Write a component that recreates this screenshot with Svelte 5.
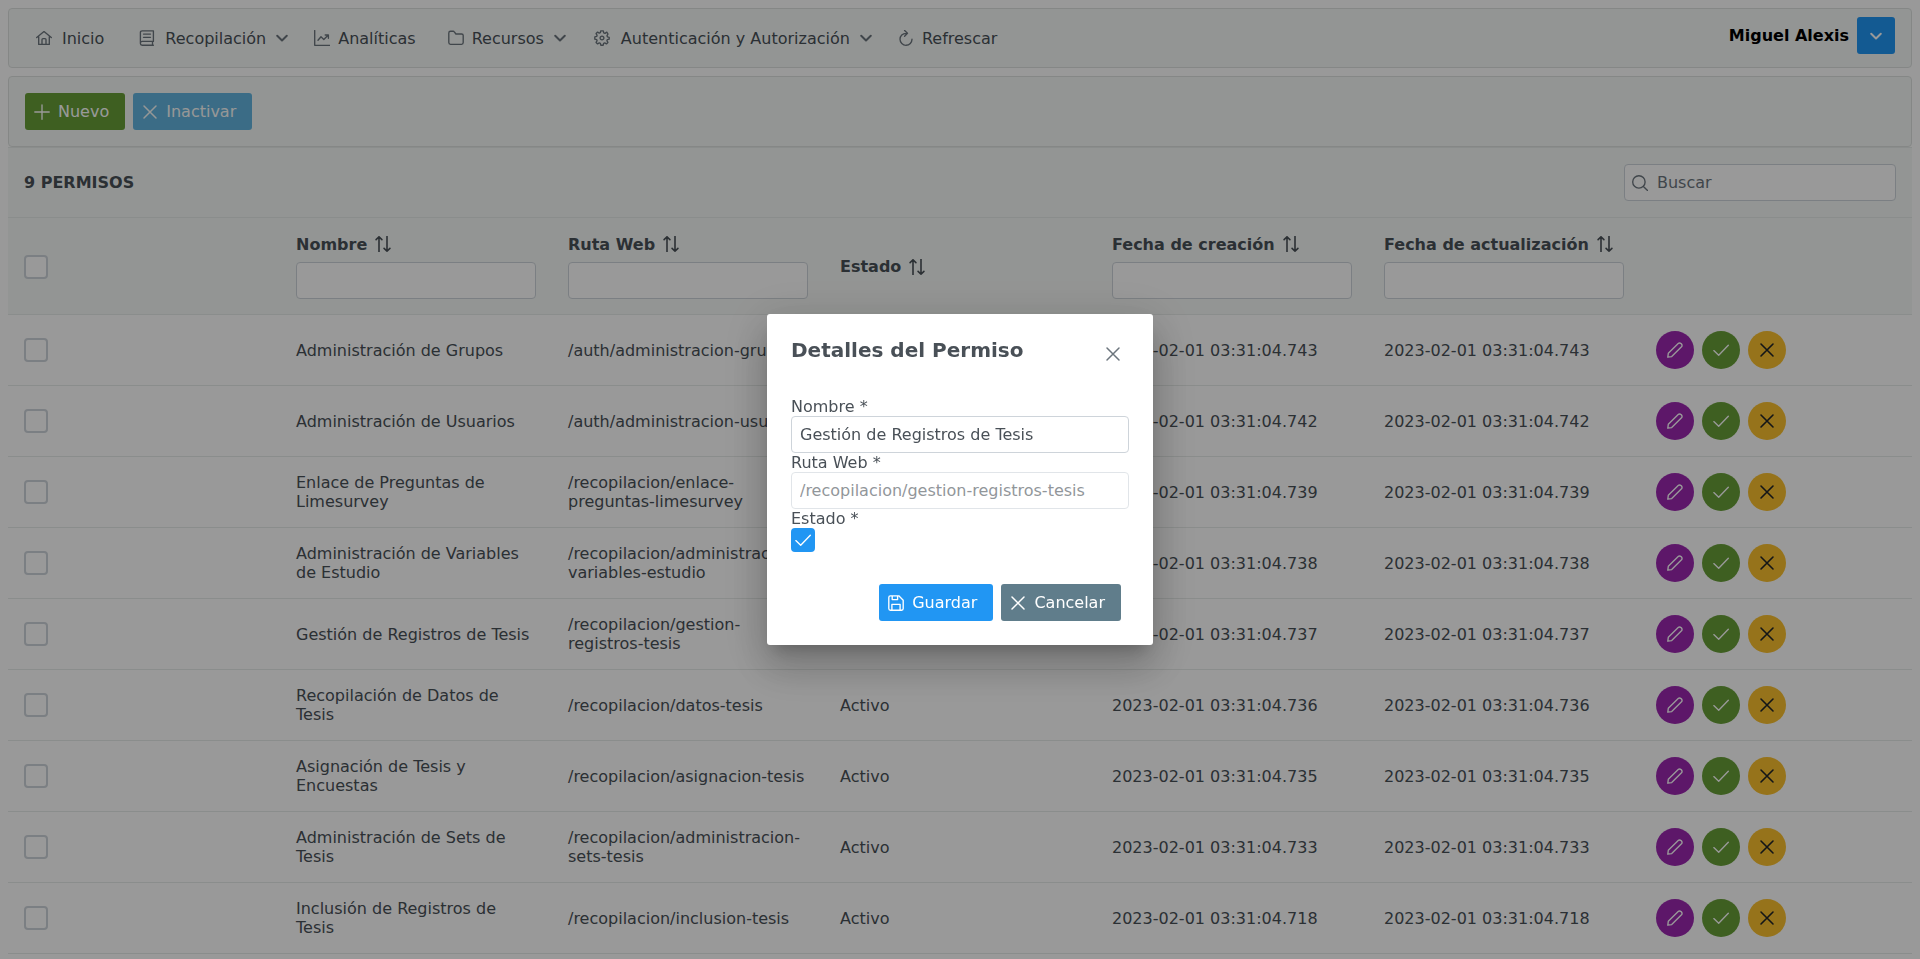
<script>
  const columns = [
    { id: 'nombre', label: 'Nombre', filter: true },
    { id: 'ruta', label: 'Ruta Web', filter: true },
    { id: 'estado', label: 'Estado', filter: false },
    { id: 'creacion', label: 'Fecha de creación', filter: true },
    { id: 'actualizacion', label: 'Fecha de actualización', filter: true }
  ];

  const permisos = [
    { nombre: 'Administración de Grupos', ruta: '/auth/administracion-grupos', ms: '743' },
    { nombre: 'Administración de Usuarios', ruta: '/auth/administracion-usuarios', ms: '742' },
    { nombre: 'Enlace de Preguntas de Limesurvey', ruta: '/recopilacion/enlace-preguntas-limesurvey', ms: '739' },
    { nombre: 'Administración de Variables de Estudio', ruta: '/recopilacion/administracion-variables-estudio', ms: '738' },
    { nombre: 'Gestión de Registros de Tesis', ruta: '/recopilacion/gestion-registros-tesis', ms: '737' },
    { nombre: 'Recopilación de Datos de Tesis', ruta: '/recopilacion/datos-tesis', ms: '736' },
    { nombre: 'Asignación de Tesis y Encuestas', ruta: '/recopilacion/asignacion-tesis', ms: '735' },
    { nombre: 'Administración de Sets de Tesis', ruta: '/recopilacion/administracion-sets-tesis', ms: '733' },
    { nombre: 'Inclusión de Registros de Tesis', ruta: '/recopilacion/inclusion-tesis', ms: '718' }
  ];

  const menu = [
    { icon: 'home', label: 'Inicio', wide: true },
    { icon: 'book', label: 'Recopilación', wide: true, sub: true },
    { icon: 'chart', label: 'Analíticas' },
    { icon: 'folder', label: 'Recursos', sub: true },
    { icon: 'cog', label: 'Autenticación y Autorización', wide: true, sub: true },
    { icon: 'refresh', label: 'Refrescar' }
  ];

  // Outline icons on a 16 unit grid
  const paths = {
    home: 'M.7 7.6 8 1.6l7.300 6M2.700 6.500V14.400H13.300V6.500M6 14.400V9.600Q6 8.600 7 8.600H9Q10 8.600 10 9.600V14.400',
    book: 'M14.400 11.400V.8H3.200Q1.400.8 1.400 2.600V13.400Q1.400 15.200 3.200 15.200H14.400M14.400 11.400H3.200Q1.400 11.400 1.400 13.200M13.500 11.400V15.200M4.500 4.100H11.500M4.500 7.300H11.500',
    chart: 'M.7.5V15.300H16M4 10.200 7 6.800 9.800 9.500 14.300 5M11.200 5H14.400V8.200',
    folder: 'M.8 12.600V3Q.8 1.200 2.500 1.200H5.200Q5.900 1.200 6.300 1.800L7.900 4H13.600Q15.200 4 15.200 5.600V12.600Q15.200 14.300 13.600 14.300H2.500Q.8 14.300.8 12.600Z',
    cog: 'M6.700.8H9.300L9.700 2.800 11 3.300 12.800 2.200 14 4 13 5.700 13.400 6.800 15.200 7.300V9.200L13.300 9.600 12.900 10.700 13.900 12.400 12.400 13.900 10.700 12.900 9.600 13.300 9.200 15.200H6.800L6.400 13.300 5.300 12.900 3.600 13.900 2.100 12.400 3.100 10.700 2.700 9.600.8 9.200V6.900L2.700 6.400 3.100 5.300 2.100 3.600 3.600 2.100 5.300 3.100 6.400 2.700ZM8 6.100A1.900 1.900 0 1 0 8 9.900A1.900 1.900 0 1 0 8 6.100Z',
    refresh: 'M9.200 3.300H8A6 6 0 1 0 14 9.200M6.600.500 9.500 3.300 6.600 6.200',
    chevron: 'M3.200 5.800 8 10.500 12.800 5.800',
    plus: 'M8 .8V15.200M.8 8H15.200',
    times: 'M2 2 14 14M14 2 2 14',
    search: 'M6.900.700A6.200 6.200 0 1 0 6.900 13.100A6.200 6.200 0 1 0 6.900.700M11.400 11.400 15.600 15.600',
    sort: 'M4 15.700V.800M1.100 3.600 4 .700 6.900 3.600M12 .300V15.200M9.100 12.400 12 15.300 14.900 12.400',
    check: 'M.8 8.600 5.700 13.200 15.300 3.300',
    pencil: 'M.8 15.200 1.300 11.300 11.200 1.500Q12.500.300 14.300 1.700Q15.700 3.400 14.500 4.800L4.700 14.600Z',
    save: 'M.8 13.600V2.400Q.8.800 2.400.800H10.800L15.200 5.200V13.600Q15.200 15.200 13.600 15.200H2.400Q.8 15.200.8 13.600ZM3.900 15V9.300H12.100V15M4.200 1V4.600H9.600V1'
  };
</script>

{#snippet icon(name, size = 16, weight = 1.35)}
  <svg class="icon" width={size} height={size} viewBox="0 0 16 16" aria-hidden="true">
    <path d={paths[name]} fill="none" stroke="currentColor" stroke-width={weight} stroke-linejoin="round" stroke-linecap="round" />
  </svg>
{/snippet}

<div class="page">
  <header class="menubar">
    <nav>
      {#each menu as item}
        <a href="#{item.icon}" class:sub={item.sub}>
          <span class="menu-icon" class:wide={item.wide}>{@render icon(item.icon)}</span>
          <span>{item.label}</span>
          {#if item.sub}
            <span class="arrow">{@render icon('chevron', 16, 2)}</span>
          {/if}
        </a>
      {/each}
    </nav>
    <div class="user">
      <b>Miguel Alexis</b>
      <button class="btn primary square" aria-label="Cuenta">{@render icon('chevron', 16, 2)}</button>
    </div>
  </header>

  <div class="toolbar">
    <button class="btn success">{@render icon('plus')}Nuevo</button>
    <button class="btn info" disabled>{@render icon('times', 16, 1.5)}Inactivar</button>
  </div>

  <main>
    <div class="table-header">
      <span>9 PERMISOS</span>
      <label class="search">
        {@render icon('search')}
        <input type="text" placeholder="Buscar" aria-label="Buscar" />
      </label>
    </div>

    <table>
      <thead>
        <tr>
          <th><input type="checkbox" aria-label="Todos" /></th>
          {#each columns as col}
            <th>
              <div class="col-title">
                <span id="col-{col.id}">{col.label}</span>
                {@render icon('sort', 16, 1.6)}
              </div>
              {#if col.filter}
                <input class="field filter" type="text" aria-labelledby="col-{col.id}" />
              {/if}
            </th>
          {/each}
          <th></th>
        </tr>
      </thead>
      <tbody>
        {#each permisos as p}
          <tr>
            <td><input type="checkbox" aria-labelledby="permiso-{p.ms}" /></td>
            <td id="permiso-{p.ms}">{p.nombre}</td>
            <td>{p.ruta}</td>
            <td>Activo</td>
            <td>2023-02-01 03:31:04.{p.ms}</td>
            <td>2023-02-01 03:31:04.{p.ms}</td>
            <td>
              <div class="actions">
                <button class="round help" aria-label="Editar">{@render icon('pencil')}</button>
                <button class="round success" aria-label="Activar">{@render icon('check')}</button>
                <button class="round warning" aria-label="Inactivar">{@render icon('times', 16, 1.6)}</button>
              </div>
            </td>
          </tr>
        {/each}
      </tbody>
    </table>
  </main>
</div>

<div class="mask">
  <div class="dialog" role="dialog" aria-modal="true" aria-labelledby="dialog-title">
    <div class="dialog-head">
      <h2 id="dialog-title">Detalles del Permiso</h2>
      <button class="close" aria-label="Cerrar">{@render icon('times', 16, 1.5)}</button>
    </div>
    <div class="dialog-body">
      <label for="f-nombre">Nombre *</label>
      <input id="f-nombre" class="field" type="text" value="Gestión de Registros de Tesis" />
      <label for="f-ruta">Ruta Web *</label>
      <input id="f-ruta" class="field" type="text" value="/recopilacion/gestion-registros-tesis" disabled />
      <label for="f-estado">Estado *</label>
      <span class="checkbox">
        <input id="f-estado" type="checkbox" checked />
        {@render icon('check')}
      </span>
    </div>
    <div class="dialog-foot">
      <button class="btn primary">{@render icon('save')}Guardar</button>
      <button class="btn secondary">{@render icon('times', 16, 1.5)}Cancelar</button>
    </div>
  </div>
</div>

<style>
  :global(body) {
    margin: 0;
    background: #fff;
  }

  .page,
  .mask {
    box-sizing: border-box;
    font: 16px/19px 'DejaVu Sans', sans-serif;
    color: #495057;
  }

  .page *,
  .mask * {
    box-sizing: border-box;
  }

  .page {
    padding: 8px 8px 0;
  }

  .icon {
    display: block;
    flex: none;
  }

  button,
  input {
    font: inherit;
    margin: 0;
  }

  .menubar {
    display: flex;
    justify-content: space-between;
    align-items: flex-start;
    padding: 8px 16px 8px 8px;
    border: 1px solid #dee2e0;
    border-radius: 4px;
    background: #f6f9f7;
  }

  nav {
    display: flex;
  }

  nav a {
    display: flex;
    align-items: center;
    height: 42px;
    padding: 0 16px;
    color: #495057;
    text-decoration: none;
  }

  nav a.sub {
    padding-right: 8px;
  }

  .menu-icon {
    display: flex;
    justify-content: center;
    width: 16px;
    margin-right: 8px;
    color: #6c757d;
  }

  .menu-icon.wide {
    width: 21px;
  }

  .arrow {
    margin-left: 8px;
    color: #6c757d;
  }

  .user {
    display: flex;
    align-items: center;
    gap: 8px;
    color: #000;
  }

  .btn {
    display: flex;
    align-items: center;
    gap: 8px;
    height: 37px;
    padding: 0 16px 0 9px;
    border: 0;
    border-radius: 3px;
    color: #fff;
  }

  .square {
    width: 38px;
    padding: 0;
    justify-content: center;
  }

  .btn:disabled {
    opacity: 0.6;
  }

  .primary {
    background: #2196f3;
  }

  .secondary {
    background: #607d8b;
  }

  .success {
    background: #689f38;
  }

  .info {
    background: #0288d1;
  }

  .help {
    background: #9c27b0;
  }

  .toolbar {
    display: flex;
    gap: 8px;
    margin-top: 8px;
    padding: 16px;
    border: 1px solid #dee2e0;
    border-radius: 4px;
    background: #f6f9f7;
  }

  .table-header {
    display: flex;
    justify-content: space-between;
    align-items: center;
    padding: 16px;
    border: solid #e7ebe9;
    border-width: 1px 0;
    background: #f6f9f7;
    font-weight: 700;
  }

  .search {
    display: flex;
    align-items: center;
    gap: 9px;
    width: 272px;
    height: 37px;
    padding: 0 7px;
    border: 1px solid #ced4da;
    border-radius: 4px;
    background: #fff;
    color: #6c757d;
    font-weight: 400;
  }

  .search input {
    flex: 1;
    min-width: 0;
    padding: 0;
    border: 0;
    outline: 0;
    background: none;
  }

  .search input::placeholder {
    color: #6c757d;
    opacity: 1;
  }

  .field {
    display: block;
    width: 100%;
    height: 37px;
    padding: 0 8px;
    border: 1px solid #ced4da;
    border-radius: 4px;
    background: #fff;
    color: #495057;
  }

  .field:disabled {
    opacity: 0.6;
  }

  table {
    width: 100%;
    table-layout: fixed;
    border-spacing: 0;
  }

  th,
  td {
    padding: 16px;
    border-bottom: 1px solid #e7ebe9;
    text-align: left;
    vertical-align: middle;
  }

  th {
    padding-bottom: 15px;
    background: #f6f9f7;
    font-weight: 700;
  }

  .col-title {
    display: flex;
    align-items: center;
    gap: 8px;
    height: 20px;
  }

  .filter {
    margin-top: 8px;
  }

  input[type='checkbox'] {
    display: block;
    appearance: none;
    width: 24px;
    height: 24px;
    border: 2px solid #ced4da;
    border-radius: 4px;
    background: #fff;
  }

  input[type='checkbox']:checked {
    border-color: #2196f3;
    background: #2196f3;
  }

  .actions {
    display: flex;
    gap: 8px;
  }

  .round {
    display: flex;
    align-items: center;
    justify-content: center;
    width: 38px;
    height: 38px;
    padding: 0;
    border: 0;
    border-radius: 50%;
    color: #fff;
  }

  .warning {
    background: #fbc02d;
    color: #212529;
  }

  .mask {
    position: fixed;
    inset: 0;
    display: flex;
    align-items: center;
    justify-content: center;
    background: rgba(0, 0, 0, 0.4);
  }

  .dialog {
    width: 386px;
    max-width: 90vw;
    padding: 24px;
    border-radius: 3px;
    background: #fff;
    box-shadow:
      0 11px 15px -7px rgba(0, 0, 0, 0.2),
      0 24px 38px 3px rgba(0, 0, 0, 0.14),
      0 9px 46px 8px rgba(0, 0, 0, 0.12);
  }

  .dialog-head {
    display: flex;
    justify-content: space-between;
    align-items: flex-start;
    margin-bottom: 27px;
  }

  h2 {
    margin: 0;
    font-size: 20px;
    line-height: 24px;
  }

  .close {
    display: flex;
    align-items: center;
    justify-content: center;
    width: 32px;
    height: 32px;
    padding: 0;
    border: 0;
    background: none;
    color: #6c757d;
  }

  .dialog-body label {
    display: block;
  }

  .checkbox {
    display: grid;
    width: 24px;
    place-items: center;
    color: #fff;
  }

  .checkbox > :global(*) {
    grid-area: 1 / 1;
  }

  .checkbox :global(svg) {
    pointer-events: none;
  }

  .dialog-foot {
    display: flex;
    justify-content: flex-end;
    gap: 8px;
    padding: 32px 8px 0 0;
  }
</style>
